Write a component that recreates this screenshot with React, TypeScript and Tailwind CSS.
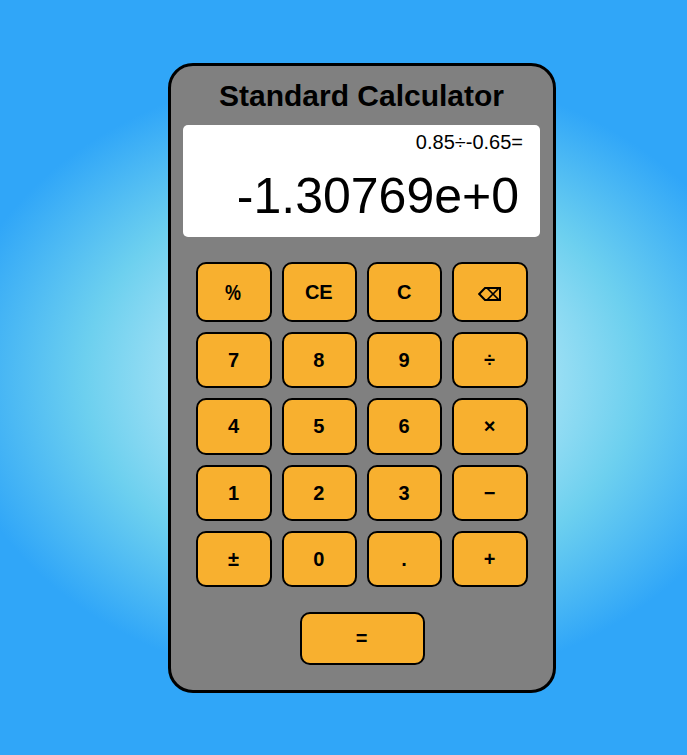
const keys = [
  "%", "CE", "C", "⌫",
  "7", "8", "9", "÷",
  "4", "5", "6", "×",
  "1", "2", "3", "−",
  "±", "0", ".", "+",
];

const keyClass =
  "flex items-center justify-center rounded-[10px] border-2 border-black bg-[#f8b02f] text-[20px] font-bold leading-[23px] text-black";

function BackspaceIcon() {
  return (
    <svg width="24" height="14" viewBox="0 0 24 14" fill="none" stroke="black" className="mt-1">
      <path d="M1.2 7 7 1H22V13H7Z" strokeWidth="2" />
      <path d="M9 1 21 13M21 1 9 13" strokeWidth="1.7" />
    </svg>
  );
}

function Label({ text }: { text: string }) {
  if (text === "⌫") return <BackspaceIcon />;
  if (text === "%") return <span className="mr-[2px] scale-x-90 scale-y-110">%</span>;
  return <span className="mr-px mt-px scale-y-105">{text}</span>;
}

export default function App() {
  return (
    <div className="h-[755px] w-[687px] overflow-hidden bg-[radial-gradient(414px_312px_at_361px_378px,#ffffff_0%,#6dd0ef_66.67%,#30a6f8_100%)] pl-[168px] pt-[63px] font-['Liberation_Sans',Arial,sans-serif] text-black">
      <main className="flex h-[630px] w-[388px] flex-col items-center rounded-[25px] border-3 border-black bg-[#808080]">
        <h1 className="mr-px mt-[12px] h-[35px] text-[30px] font-bold leading-[35px]">Standard Calculator</h1>
        <section className="mr-px mt-[12px] h-[112px] w-[357px] rounded-[5px] bg-white text-right">
          <div className="scale-y-105 pr-[17px] pt-[6px] text-[20px] leading-[23px]">0.85÷-0.65=</div>
          <div className="pr-[21px] pt-[14px] text-[50px] leading-[57px]">-1.30769e+0</div>
        </section>
        <div className="mt-[25px] grid w-[331.33px] grid-cols-4 grid-rows-[60px_56.25px_56.25px_56.25px_56.25px] gap-[10px]">
          {keys.map((k) => (
            <button key={k} className={keyClass}>
              <Label text={k} />
            </button>
          ))}
        </div>
        <button className={`${keyClass} ml-px mt-[25px] h-[53px] w-[125px]`}>
          <span className="mr-[2px]">=</span>
        </button>
      </main>
    </div>
  );
}
